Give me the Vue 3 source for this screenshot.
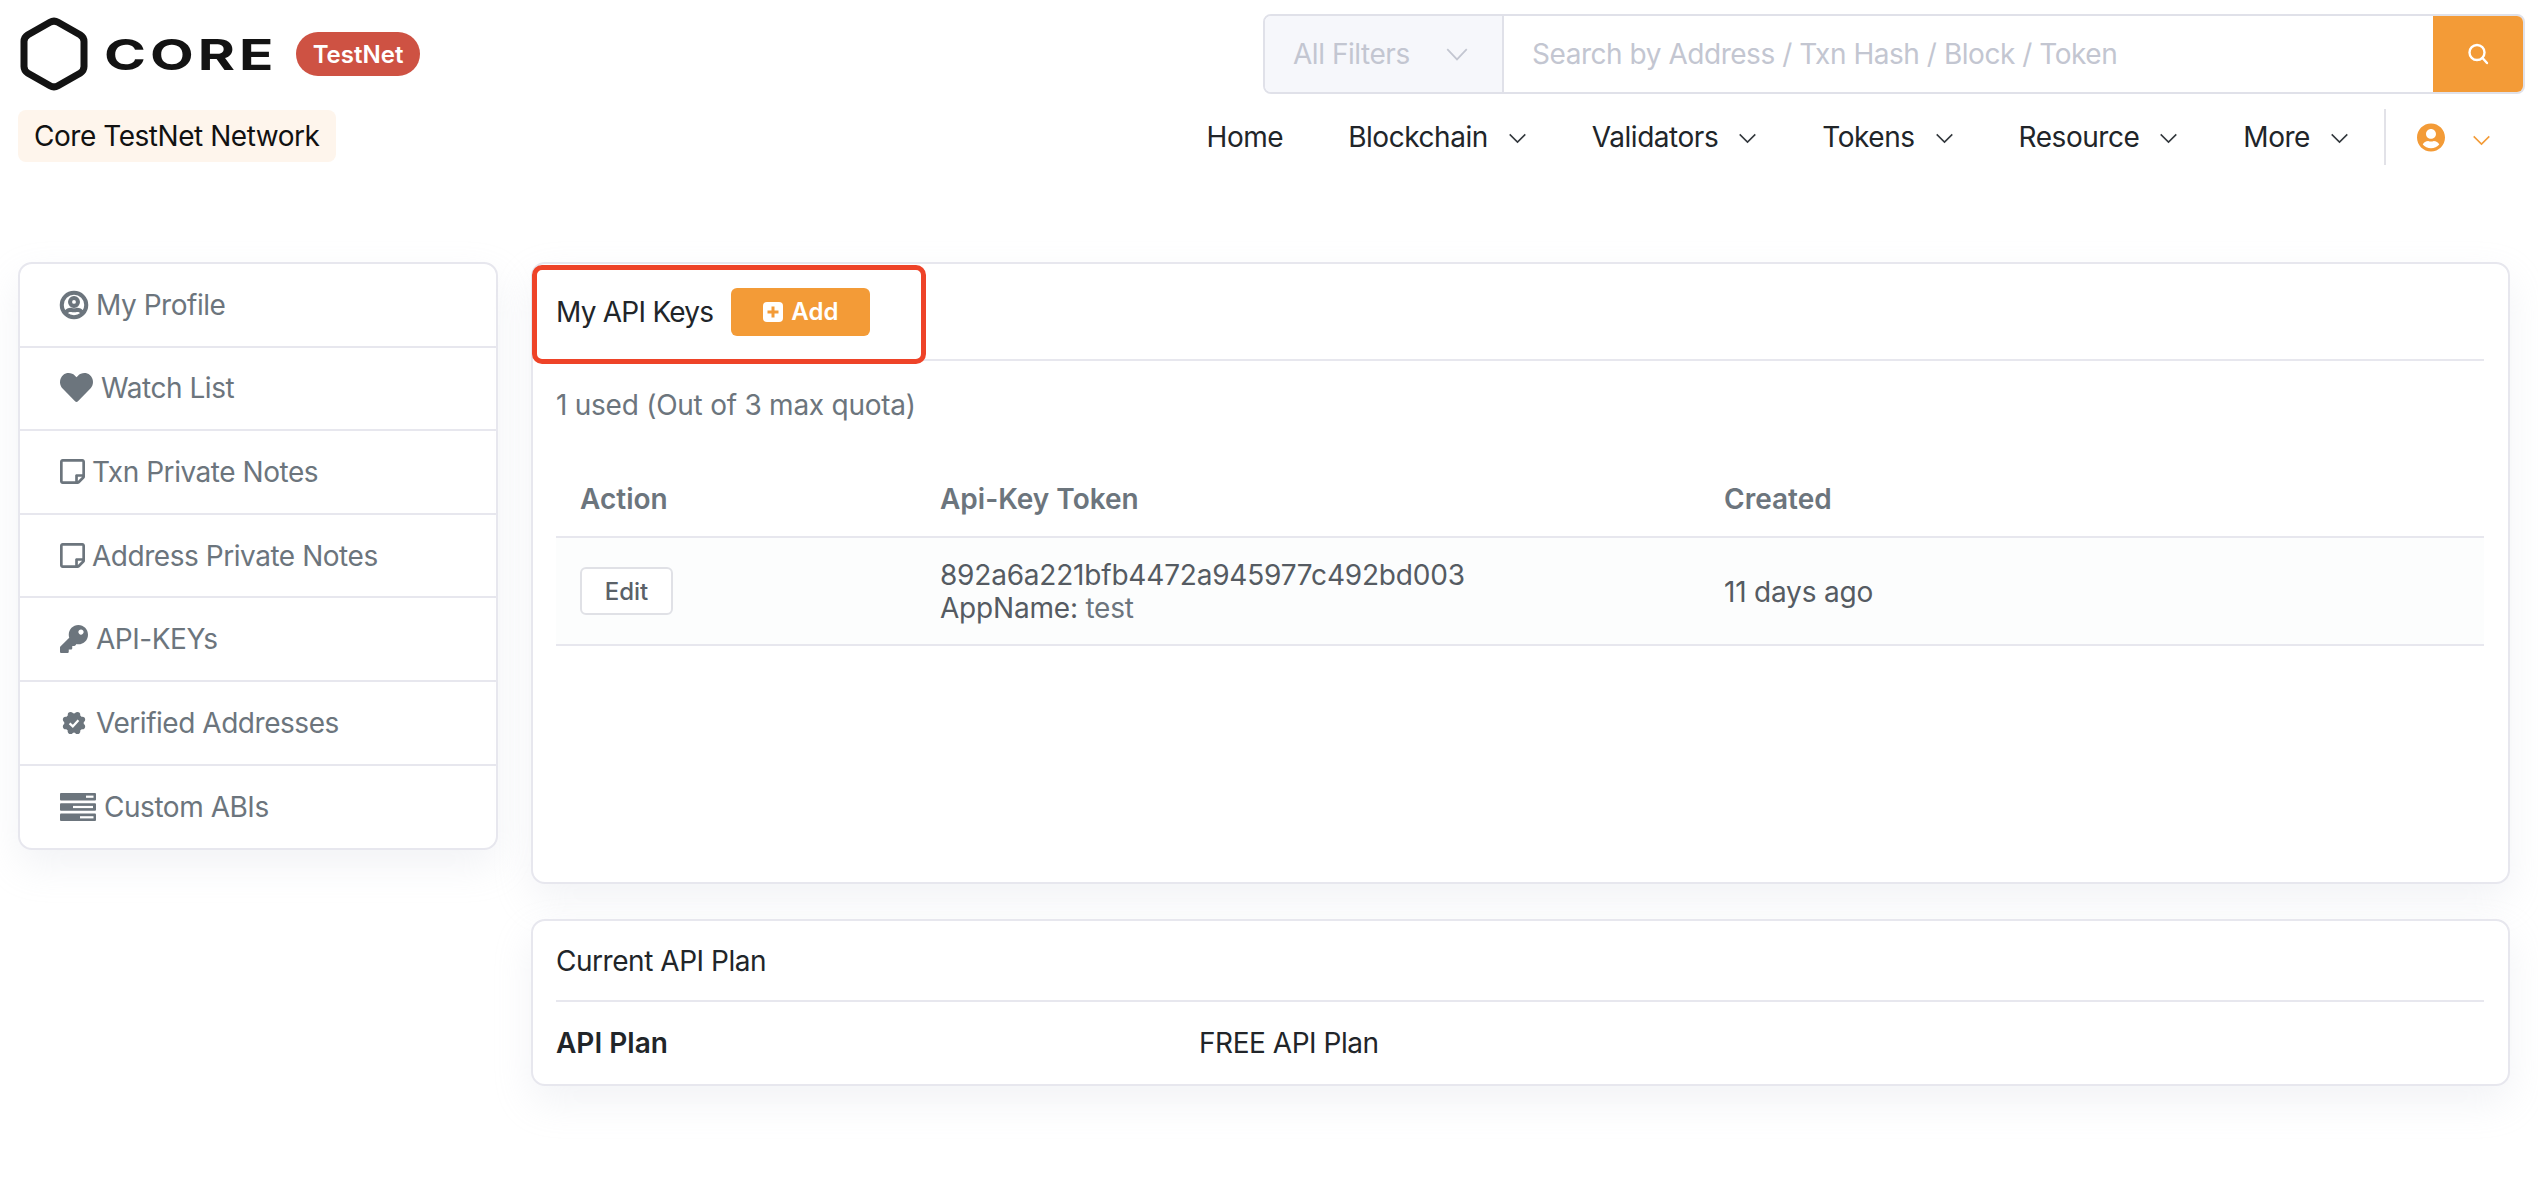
<script setup>
const navItems = [
  { label: 'Home', caret: false },
  { label: 'Blockchain', caret: true },
  { label: 'Validators', caret: true },
  { label: 'Tokens', caret: true },
  { label: 'Resource', caret: true },
  { label: 'More', caret: true },
]
const sideItems = [
  { label: 'My Profile', icon: 'profile' },
  { label: 'Watch List', icon: 'heart' },
  { label: 'Txn Private Notes', icon: 'note' },
  { label: 'Address Private Notes', icon: 'note' },
  { label: 'API-KEYs', icon: 'key' },
  { label: 'Verified Addresses', icon: 'badge' },
  { label: 'Custom ABIs', icon: 'server' },
]
const bumps = Array.from({ length: 8 }, (_, i) => ({
  x: 12 + 9 * Math.cos((i * Math.PI) / 4 + Math.PI / 8),
  y: 12 + 9 * Math.sin((i * Math.PI) / 4 + Math.PI / 8),
}))
</script>

<template>
  <div class="page">
    <header class="top">
      <div class="brand">
        <div class="logo-row">
          <svg class="hex" viewBox="0 0 68 76" aria-hidden="true">
            <path d="M30 6.3 Q34 4 38 6.3 L60 18.8 Q64 21.3 64 25.5 V50.5 Q64 54.7 60 57.2 L38 69.7 Q34 72 30 69.7 L8 57.2 Q4 54.7 4 50.5 V25.5 Q4 21.3 8 18.8 Z" fill="none" stroke="#131313" stroke-width="7" stroke-linejoin="round" />
          </svg>
          <span class="wordmark">CORE</span>
          <span class="pill">TestNet</span>
        </div>
        <div class="chip">Core TestNet Network</div>
      </div>

      <div class="top-right">
        <div class="search">
          <div class="filter">
            <span>All Filters</span>
            <svg class="chev" viewBox="0 0 20 12"><polyline points="1,1 10,10.5 19,1" /></svg>
          </div>
          <div class="query">Search by Address / Txn Hash / Block / Token</div>
          <div class="go">
            <svg viewBox="0 0 24 24" class="mag"><circle cx="11" cy="10.5" r="7.5" /><line x1="16.5" y1="16" x2="21" y2="21" /></svg>
          </div>
        </div>
        <nav class="nav">
          <div v-for="item in navItems" :key="item.label" class="nav-item">
            <span>{{ item.label }}</span>
            <svg v-if="item.caret" class="caret" viewBox="0 0 20 12"><polyline points="1.5,1.5 10,10 18.5,1.5" /></svg>
          </div>
          <div class="account">
            <svg class="avatar" viewBox="0 0 496 512">
              <path fill="#f39b37" d="M248 8C111 8 0 119 0 256s111 248 248 248 248-111 248-248S385 8 248 8zm0 96c48.6 0 88 39.4 88 88s-39.4 88-88 88-88-39.4-88-88 39.4-88 88-88zm0 344c-58.7 0-111.3-26.6-146.5-68.2 18.8-35.4 55.6-59.8 98.5-59.8 2.4 0 4.8.4 7.1 1.1 13 4.2 26.6 6.9 40.9 6.9 14.3 0 28-2.7 40.9-6.9 2.3-.7 4.7-1.1 7.1-1.1 42.9 0 79.7 24.4 98.5 59.8C359.3 421.4 306.7 448 248 448z" />
            </svg>
            <svg class="caret orange" viewBox="0 0 20 12"><polyline points="1.5,1.5 10,10 18.5,1.5" /></svg>
          </div>
        </nav>
      </div>
    </header>

    <div class="content">
      <aside class="side">
        <div v-for="item in sideItems" :key="item.label" class="side-row">
          <svg v-if="item.icon === 'profile'" class="ic ic-profile" viewBox="0 0 496 512"><path d="M248 104c-53 0-96 43-96 96s43 96 96 96 96-43 96-96-43-96-96-96zm0 144c-26.5 0-48-21.5-48-48s21.5-48 48-48 48 21.5 48 48-21.5 48-48 48zm0-240C111 8 0 119 0 256s111 248 248 248 248-111 248-248S385 8 248 8zm0 448c-49.7 0-95.1-18.3-130.1-48.4 14.9-23 40.4-38.6 69.6-39.5 20.8 6.4 40.6 9.6 60.5 9.6s39.7-3.1 60.5-9.6c29.2 1 54.7 16.5 69.6 39.5-35 30.1-80.4 48.4-130.1 48.4zm162.7-84.1c-24.4-31.4-62.1-51.9-105.1-51.9-10.2 0-26 9.6-57.6 9.6-31.5 0-47.4-9.6-57.6-9.6-42.9 0-80.6 20.5-105.1 51.9C61.9 339.2 48 299.2 48 256c0-110.3 89.7-200 200-200s200 89.7 200 200c0 43.2-13.9 83.2-37.3 115.9z" /></svg>
          <svg v-else-if="item.icon === 'heart'" class="ic ic-heart" viewBox="0 0 512 512"><path d="M462.3 62.6C407.5 15.9 326 24.3 275.7 76.2L256 96.5l-19.7-20.3C186.1 24.3 104.5 15.9 49.7 62.6c-62.8 53.6-66.1 149.8-9.9 207.9l193.5 199.8c12.5 12.9 32.8 12.9 45.3 0l193.5-199.8c56.3-58.1 53-154.3-9.8-207.9z" /></svg>
          <svg v-else-if="item.icon === 'note'" class="ic ic-note" viewBox="0 32 448 448"><path d="M448 348.106V80c0-26.51-21.49-48-48-48H48C21.49 32 0 53.49 0 80v351.988c0 26.51 21.49 48 48 48h268.118a48 48 0 0 0 33.941-14.059l83.882-83.882A48 48 0 0 0 448 348.106zm-128 80v-76.118h76.118L320 428.106zM400 80v223.988H296c-13.255 0-24 10.745-24 24v104H48V80h352z" /></svg>
          <svg v-else-if="item.icon === 'key'" class="ic ic-key" viewBox="0 0 512 512"><path d="M512 176.001C512 273.203 433.202 352 336 352c-11.22 0-22.19-1.062-32.827-3.069l-24.012 27.014A23.999 23.999 0 0 1 261.223 384H224v40c0 13.255-10.745 24-24 24h-40v40c0 13.255-10.745 24-24 24H24c-13.255 0-24-10.745-24-24v-78.059c0-6.365 2.529-12.47 7.029-16.971l161.802-161.802C163.108 213.814 160 195.271 160 176 160 78.798 238.797.001 335.999 0 433.488-.001 512 78.511 512 176.001zM336 128c0 26.51 21.49 48 48 48s48-21.49 48-48-21.49-48-48-48-48 21.49-48 48z" /></svg>
          <svg v-else-if="item.icon === 'badge'" class="ic ic-badge" viewBox="0 0 24 24">
            <circle cx="12" cy="12" r="9.8" />
            <circle v-for="(b, i) in bumps" :key="i" :cx="b.x" :cy="b.y" r="2.8" />
            <polyline class="tick" points="7.6,12.4 10.8,15.4 16.4,9.2" />
          </svg>
          <svg v-else class="ic ic-server" viewBox="0 0 36 28">
            <rect y="0" width="36" height="7.4" rx="1" />
            <rect y="10.3" width="36" height="7.4" rx="1" />
            <rect y="20.6" width="36" height="7.4" rx="1" />
            <rect class="slot" x="26" y="2.6" width="7.5" height="2.2" />
            <rect class="slot" x="13" y="12.9" width="20" height="2.2" />
            <rect class="slot" x="20" y="23.2" width="13.5" height="2.2" />
          </svg>
          <span>{{ item.label }}</span>
        </div>
      </aside>

      <main class="main">
        <section class="card card-keys">
          <div class="card-head">
            <span class="title">My API Keys</span>
            <div class="add">
              <svg viewBox="0 0 20 20" class="plus">
                <rect width="20" height="20" rx="4" fill="#fff" />
                <path d="M10 4.5v11M4.5 10h11" stroke="#f39b37" stroke-width="3" fill="none" />
              </svg>
              <span>Add</span>
            </div>
          </div>
          <p class="used">1 used (Out of 3 max quota)</p>
          <table class="keys">
            <thead>
              <tr>
                <th class="c1">Action</th>
                <th class="c2">Api-Key Token</th>
                <th class="c3">Created</th>
              </tr>
            </thead>
            <tbody>
              <tr>
                <td><span class="edit">Edit</span></td>
                <td class="tok">
                  <div class="hash">892a6a221bfb4472a945977c492bd003</div>
                  <div class="app"><span class="hash">AppName:</span> test</div>
                </td>
                <td class="age">11 days ago</td>
              </tr>
            </tbody>
          </table>
          <div class="callout"></div>
        </section>

        <section class="card card-plan">
          <div class="plan-head">Current API Plan</div>
          <div class="plan-row">
            <strong>API Plan</strong>
            <span>FREE API Plan</span>
          </div>
        </section>
      </main>
    </div>
  </div>
</template>

<style>
html, body { margin: 0; background: #fff; }
</style>

<style scoped>
.page {
  width: 2538px;
  height: 1192px;
  overflow: hidden;
  font-family: Inter, "Liberation Sans", sans-serif;
  font-size: 28px;
  letter-spacing: -0.46px;
  color: #6c757d;
  background: #fff;
}
.top {
  display: flex;
  justify-content: space-between;
  padding: 14px 13px 0 18px;
  height: 248px;
  box-sizing: border-box;
}
.brand { display: flex; flex-direction: column; align-items: flex-start; }
.logo-row { display: flex; align-items: center; height: 80px; margin-left: 2px; }
.hex { width: 68px; height: 76px; display: block; }
.wordmark {
  margin-left: 16px;
  font-size: 43px;
  line-height: 1;
  font-weight: 700;
  letter-spacing: 3px;
  color: #131313;
  width: 166px;
  transform: scaleX(1.32);
  transform-origin: left center;
}
.pill {
  margin-left: 26px;
  width: 124px;
  height: 44px;
  border-radius: 22px;
  background: #ce5243;
  color: #fff;
  font-size: 24px;
  font-weight: 600;
  letter-spacing: 0;
  display: flex;
  align-items: center;
  justify-content: center;
}
.chip {
  margin-top: 16px;
  width: 318px;
  height: 52px;
  box-sizing: border-box;
  padding-left: 16px;
  background: #fef5ec;
  border-radius: 8px;
  color: #111;
  display: flex;
  align-items: center;
  white-space: nowrap;
}
.top-right { width: 1262px; display: flex; flex-direction: column; }
.search {
  display: flex;
  height: 80px;
  box-sizing: border-box;
  border: 2px solid #e0e1e9;
  border-radius: 8px;
  overflow: hidden;
  color: #c3c6d1;
}
.filter {
  width: 239px;
  flex: none;
  box-sizing: border-box;
  padding: 0 34px 0 28px;
  background: #f6f7fb;
  border-right: 2px solid #e0e1e9;
  display: flex;
  align-items: center;
  justify-content: space-between;
}
.chev { width: 22px; height: 13px; fill: none; stroke: #c3c6d1; stroke-width: 1.6; }
.query { flex: 1; display: flex; align-items: center; padding-left: 28px; white-space: nowrap; }
.go {
  width: 90px;
  flex: none;
  background: #f39b37;
  display: flex;
  align-items: center;
  justify-content: center;
}
.mag { width: 24px; height: 24px; fill: none; stroke: #fff; stroke-width: 2.4; stroke-linecap: round; }
.nav {
  display: flex;
  justify-content: flex-end;
  align-items: center;
  gap: 65px;
  margin-top: 15px;
  height: 56px;
  padding-right: 34px;
  color: #212529;
}
.nav-item { display: flex; align-items: center; gap: 20px; white-space: nowrap; }
.caret { width: 19px; height: 11px; fill: none; stroke: #33383d; stroke-width: 1.7; margin-top: 3px; }
.caret.orange { stroke: #f39b37; margin-left: 27px; margin-top: 6px; }
.account {
  display: flex;
  align-items: center;
  height: 56px;
  margin-left: -30px;
  padding-left: 31px;
  border-left: 2px solid #e2e2e8;
}
.avatar { width: 28px; height: 29px; }
.content {
  display: flex;
  align-items: flex-start;
  gap: 33px;
  padding: 14px 28px 0 18px;
}
.side {
  width: 480px;
  flex: none;
  box-sizing: border-box;
  background: #fff;
  border: 2px solid #e7e7ee;
  border-radius: 14px;
  box-shadow: 0 16px 38px rgba(189, 197, 209, 0.2);
}
.side-row {
  height: 83.6px;
  box-sizing: border-box;
  border-bottom: 2px solid #e7e7ee;
  padding-left: 40px;
  display: flex;
  align-items: center;
  gap: 8px;
  white-space: nowrap;
}
.side-row:last-child { border-bottom: 0; height: 82px; }
.ic { fill: #6c757d; flex: none; display: block; }
.ic-profile { width: 28px; height: 28px; overflow: visible; stroke: #6c757d; stroke-width: 26; }
.ic-heart { width: 33px; height: 33px; margin-top: -2px; }
.ic-note { width: 25px; height: 25px; margin-right: -1px; }
.ic-key { width: 28px; height: 28px; }
.ic-badge { width: 24px; height: 24px; margin: 0 2px; }
.ic-server { width: 36px; height: 28px; }
.tick { fill: none; stroke: #fff; stroke-width: 2.3; }
.slot { fill: #fff; }
.main { flex: 1; display: flex; flex-direction: column; gap: 35px; min-width: 0; }
.card {
  position: relative;
  box-sizing: border-box;
  background: #fff;
  border: 2px solid #e7e7ee;
  border-radius: 14px;
  padding: 0 24px 0 23px;
  box-shadow: 0 16px 38px rgba(189, 197, 209, 0.2);
}
.card-keys { height: 622px; }
.card-plan { height: 167px; }
.card-head {
  height: 97px;
  box-sizing: border-box;
  border-bottom: 2px solid #e7e7ee;
  display: flex;
  align-items: center;
  gap: 18px;
  color: #212529;
}
.title { letter-spacing: -0.75px; }
.add {
  width: 139px;
  height: 48px;
  border-radius: 6px;
  background: #f39b37;
  color: #fff;
  font-size: 24px;
  font-weight: 600;
  letter-spacing: 0;
  display: flex;
  align-items: center;
  justify-content: center;
  gap: 8px;
}
.plus { width: 20px; height: 20px; }
.used { margin: 0; height: 90px; box-sizing: border-box; padding-bottom: 3px; display: flex; align-items: center; letter-spacing: -0.25px; }
.keys { width: 100%; border-collapse: collapse; table-layout: fixed; }
.keys th {
  height: 86px;
  padding: 11px 0 0;
  text-align: left;
  font-weight: 600;
  letter-spacing: 0;
  border-bottom: 2px solid #e7e7ee;
  box-sizing: border-box;
}
.keys th.c1 { width: 384px; padding-left: 24px; }
.keys th.c2 { width: 784px; }
.keys td {
  height: 108px;
  padding: 0;
  background: #fcfdfd;
  border-bottom: 2px solid #e7e7ee;
  box-sizing: border-box;
}
.keys td:first-child { padding-left: 24px; }
.edit {
  display: flex;
  align-items: center;
  justify-content: center;
  width: 93px;
  height: 48px;
  box-sizing: border-box;
  border: 2px solid #e0e1e6;
  border-radius: 6px;
  background: #fff;
  font-size: 24px;
  font-weight: 500;
  letter-spacing: 0;
  color: #5a6168;
}
.keys td.tok { line-height: 33px; padding-top: 2px; letter-spacing: -0.2px; }
.hash { color: #555b62; }
.keys td.age { color: #555b62; padding-top: 2px; letter-spacing: -0.2px; }
.callout {
  position: absolute;
  left: -1px;
  top: 1px;
  width: 394px;
  height: 99px;
  box-sizing: border-box;
  border: 5px solid #ee4328;
  border-radius: 10px;
  pointer-events: none;
}
.plan-head {
  height: 81px;
  box-sizing: border-box;
  border-bottom: 2px solid #e7e7ee;
  display: flex;
  align-items: center;
  color: #212529;
}
.plan-row {
  height: 82px;
  display: flex;
  align-items: center;
  color: #212529;
}
.plan-row strong { width: 643px; font-weight: 600; letter-spacing: 0; }
</style>
